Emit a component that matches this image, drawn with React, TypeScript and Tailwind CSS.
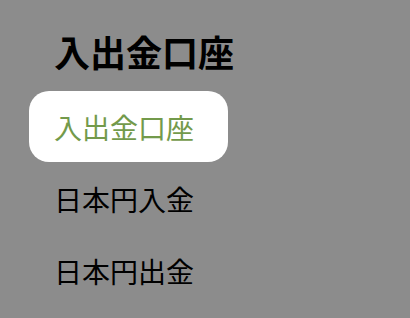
const items = [
  { label: '入出金口座', active: true },
  { label: '日本円入金', active: false },
  { label: '日本円出金', active: false },
]

export default function App() {
  return (
    <div
      className="h-[318px] w-[410px] bg-[#8c8c8c] overflow-hidden"
      style={{ fontFamily: '"Noto Sans CJK JP", "Noto Sans", sans-serif' }}
    >
      <div className="pl-[29px] pt-[33px]">
        <h1 className="pl-[25px] text-[36px] font-bold leading-[36px] text-black">
          入出金口座
        </h1>
        <ul className="mt-[22px] flex flex-col gap-[1px]">
          {items.map((item) => (
            <li
              key={item.label}
              className={`flex h-[71px] w-[199px] items-center rounded-[20px] pl-[25px] text-[28px] leading-none ${
                item.active ? 'bg-white text-[#739a4b]' : 'text-black'
              }`}
            >
              {item.label}
            </li>
          ))}
        </ul>
      </div>
    </div>
  )
}
